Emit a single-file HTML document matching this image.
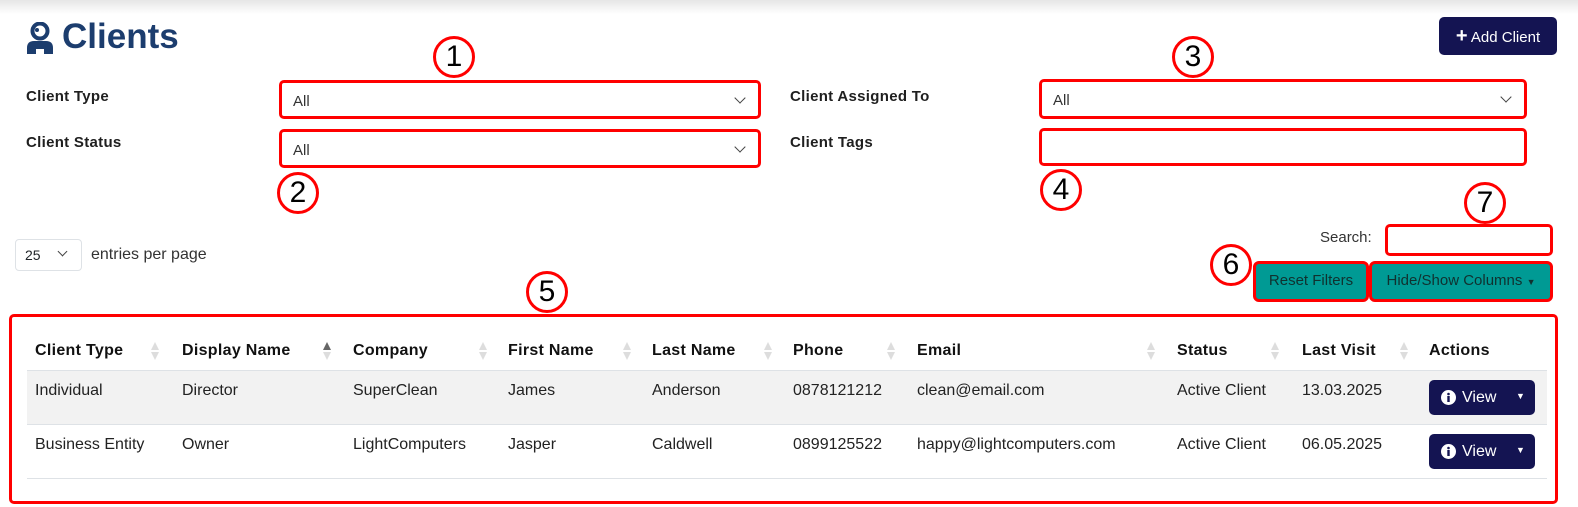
<!DOCTYPE html>
<html><head><meta charset="utf-8"><style>
*{box-sizing:border-box;margin:0;padding:0}
body{width:1578px;height:507px;background:#fff;font-family:"Liberation Sans",sans-serif;color:#212529;position:relative;overflow:hidden;font-size:16px}
.a{position:absolute}
.topbar{left:0;top:0;width:1578px;height:14px;background:linear-gradient(#e6e6e6,#fff)}
.lbl{font-weight:bold;font-size:15px;color:#1f1f1f;letter-spacing:.3px}
.sel{border:3px solid #f00;border-radius:5px;background:#fff}
.sel span{position:absolute;left:11px;top:10px;font-size:15px;color:#333}
.chev{position:absolute;right:14px;top:11px;width:8px;height:8px;border-right:1.8px solid #444;border-bottom:1.8px solid #444;transform:rotate(45deg)}
.circ{width:42px;height:42px;border:3px solid #f00;border-radius:50%;background:#fff;font-size:30px;text-align:center;line-height:36px;color:#000}
.btn{background:#009a94;border:3px solid #f00;border-radius:6px;color:#10312f;font-size:15px;text-align:center;line-height:34px}
.th{font-weight:bold;font-size:16px;color:#111;top:342px;letter-spacing:.3px}
.td{font-size:16px;color:#222}
.view{width:106px;height:35px;background:#141452;border-radius:5px;color:#fff;font-size:16px}
</style></head><body>
<div class="a topbar"></div>
<svg class="a" style="left:26px;top:22px" width="28" height="32" viewBox="0 0 28 32"><circle cx="14" cy="9" r="7.5" fill="none" stroke="#1c3d6e" stroke-width="4"/><circle cx="11" cy="8" r="2" fill="#1c3d6e"/><path d="M1 32 V26 Q1 19 8 19 H20 Q27 19 27 26 V32 Z" fill="#1c3d6e"/><rect x="10" y="27" width="8" height="5" fill="#fff"/></svg>
<div class="a" style="left:62px;top:17px;font-size:35px;font-weight:bold;color:#1c3d6e">Clients</div>
<div class="a" style="left:1439px;top:17px;width:118px;height:38px;background:#141452;border-radius:5px;color:#fff;font-size:15px;line-height:38px;text-align:center"><b style="font-size:20px">+</b> Add Client</div>

<div class="a lbl" style="left:26px;top:88px">Client Type</div>
<div class="a lbl" style="left:26px;top:134px">Client Status</div>
<div class="a lbl" style="left:790px;top:88px">Client Assigned To</div>
<div class="a lbl" style="left:790px;top:134px">Client Tags</div>
<div class="a sel" style="left:279px;top:80px;width:482px;height:39px"><span>All</span><i class="chev"></i></div>
<div class="a sel" style="left:279px;top:129px;width:482px;height:39px"><span>All</span><i class="chev"></i></div>
<div class="a sel" style="left:1039px;top:79px;width:488px;height:40px"><span>All</span><i class="chev"></i></div>
<div class="a sel" style="left:1039px;top:128px;width:488px;height:38px"></div>

<div class="a circ" style="left:433px;top:36px">1</div>
<div class="a circ" style="left:277px;top:172px">2</div>
<div class="a circ" style="left:1172px;top:36px">3</div>
<div class="a circ" style="left:1040px;top:169px">4</div>
<div class="a circ" style="left:526px;top:271px">5</div>
<div class="a circ" style="left:1210px;top:244px">6</div>
<div class="a circ" style="left:1464px;top:182px">7</div>

<div class="a" style="left:15px;top:239px;width:67px;height:32px;border:1px solid #dee2e6;border-radius:4px;font-size:14px"><span style="position:absolute;left:9px;top:7px">25</span><i class="chev" style="right:15px;top:8px;width:7px;height:7px;border-width:1.4px"></i></div>
<div class="a" style="left:91px;top:246px;font-size:16px;color:#333">entries per page</div>
<div class="a" style="left:1320px;top:229px;font-size:15px;color:#333">Search:</div>
<div class="a" style="left:1385px;top:224px;width:168px;height:32px;border:3px solid #f00;border-radius:5px"></div>
<div class="a btn" style="left:1253px;top:261px;width:116px;height:41px">Reset Filters</div>
<div class="a btn" style="left:1369px;top:261px;width:184px;height:41px">Hide/Show Columns <span style="font-size:9px">▼</span></div>

<div class="a" style="left:9px;top:314px;width:1549px;height:190px;border:3px solid #f00;border-radius:5px"></div>
<div class="a" style="left:27px;top:370px;width:1520px;height:1px;background:#dee2e6"></div>
<div class="a" style="left:27px;top:371px;width:1520px;height:53px;background:#f2f2f2"></div>
<div class="a" style="left:27px;top:424px;width:1520px;height:1px;background:#dee2e6"></div>
<div class="a" style="left:27px;top:478px;width:1520px;height:1px;background:#dee2e6"></div>

<div class="a th" style="left:35px">Client Type</div>
<div class="a th" style="left:182px">Display Name</div>
<div class="a th" style="left:353px">Company</div>
<div class="a th" style="left:508px">First Name</div>
<div class="a th" style="left:652px">Last Name</div>
<div class="a th" style="left:793px">Phone</div>
<div class="a th" style="left:917px">Email</div>
<div class="a th" style="left:1177px">Status</div>
<div class="a th" style="left:1302px">Last Visit</div>
<div class="a th" style="left:1429px">Actions</div>

<svg class="a" style="left:0;top:340px" width="1578" height="22">
<g fill="#ddd">
<path d="M155 2l4 8h-8z M155 20l4-8h-8z"/>
<path d="M483 2l4 8h-8z M483 20l4-8h-8z"/>
<path d="M627 2l4 8h-8z M627 20l4-8h-8z"/>
<path d="M768 2l4 8h-8z M768 20l4-8h-8z"/>
<path d="M891 2l4 8h-8z M891 20l4-8h-8z"/>
<path d="M1151 2l4 8h-8z M1151 20l4-8h-8z"/>
<path d="M1275 2l4 8h-8z M1275 20l4-8h-8z"/>
<path d="M1404 2l4 8h-8z M1404 20l4-8h-8z"/>
<path d="M327 20l4-8h-8z"/>
</g>
<path d="M327 2l4 8h-8z" fill="#666"/>
</svg>

<div class="a td" style="left:35px;top:382px">Individual</div>
<div class="a td" style="left:182px;top:382px">Director</div>
<div class="a td" style="left:353px;top:382px">SuperClean</div>
<div class="a td" style="left:508px;top:382px">James</div>
<div class="a td" style="left:652px;top:382px">Anderson</div>
<div class="a td" style="left:793px;top:382px">0878121212</div>
<div class="a td" style="left:917px;top:382px">clean@email.com</div>
<div class="a td" style="left:1177px;top:382px">Active Client</div>
<div class="a td" style="left:1302px;top:382px">13.03.2025</div>

<div class="a td" style="left:35px;top:436px">Business Entity</div>
<div class="a td" style="left:182px;top:436px">Owner</div>
<div class="a td" style="left:353px;top:436px">LightComputers</div>
<div class="a td" style="left:508px;top:436px">Jasper</div>
<div class="a td" style="left:652px;top:436px">Caldwell</div>
<div class="a td" style="left:793px;top:436px">0899125522</div>
<div class="a td" style="left:917px;top:436px">happy@lightcomputers.com</div>
<div class="a td" style="left:1177px;top:436px">Active Client</div>
<div class="a td" style="left:1302px;top:436px">06.05.2025</div>

<div class="a view" style="left:1429px;top:380px"><svg class="a" style="left:12px;top:10px" width="15" height="15"><circle cx="7.5" cy="7.5" r="7.5" fill="#fff"/><rect x="6.3" y="6" width="2.4" height="6" fill="#141452"/><circle cx="7.5" cy="4" r="1.3" fill="#141452"/></svg><span class="a" style="left:33px;top:9px">View</span><span class="a" style="left:87px;top:11px;font-size:9px">▼</span></div>
<div class="a view" style="left:1429px;top:434px"><svg class="a" style="left:12px;top:10px" width="15" height="15"><circle cx="7.5" cy="7.5" r="7.5" fill="#fff"/><rect x="6.3" y="6" width="2.4" height="6" fill="#141452"/><circle cx="7.5" cy="4" r="1.3" fill="#141452"/></svg><span class="a" style="left:33px;top:9px">View</span><span class="a" style="left:87px;top:11px;font-size:9px">▼</span></div>
</body></html>
